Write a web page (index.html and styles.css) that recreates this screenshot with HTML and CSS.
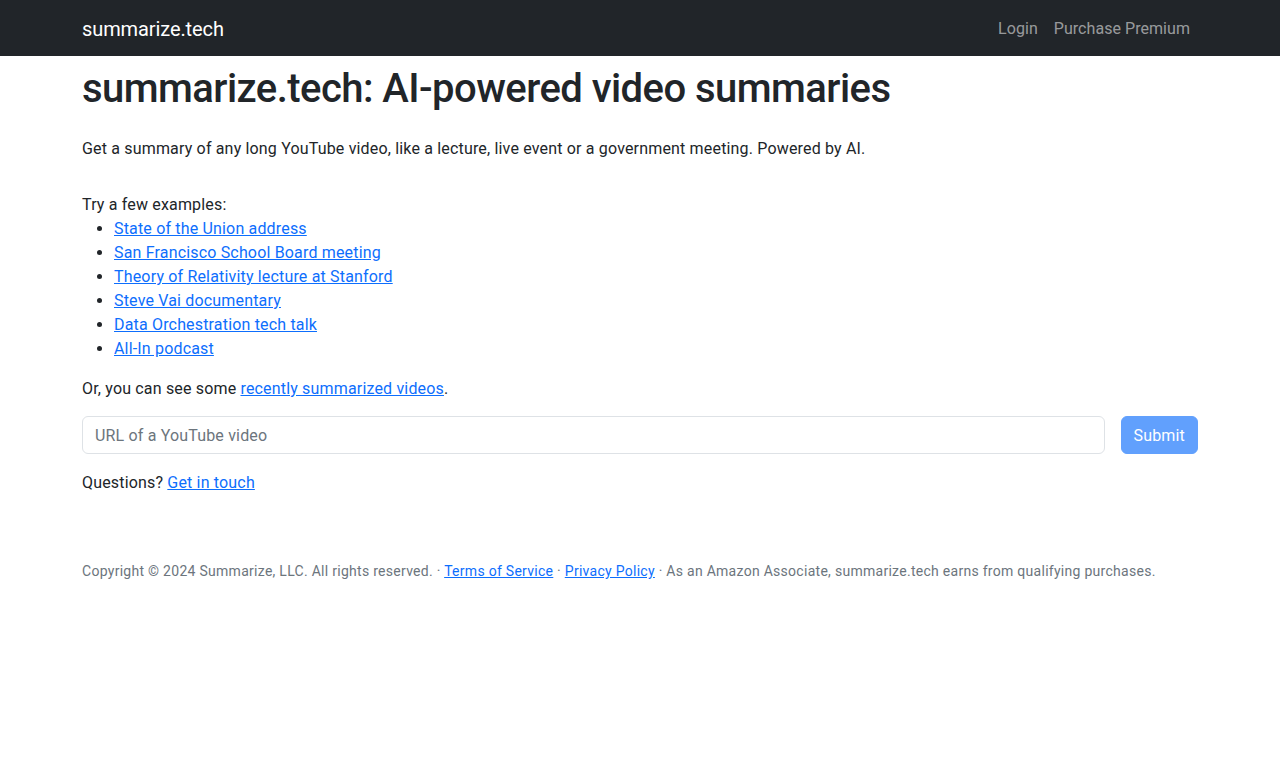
FILE: index.html
```html
<!DOCTYPE html>
<html lang="en">
<head>
<meta charset="utf-8">
<title>summarize.tech</title>
<link rel="stylesheet" href="styles.css">
</head>
<body>
<nav class="navbar">
  <div class="container nav-inner">
    <a class="brand" href="#">summarize.tech</a>
    <div class="nav-links">
      <a class="nav-link" href="#">Login</a>
      <a class="nav-link" href="#">Purchase Premium</a>
    </div>
  </div>
</nav>
<main class="container main">
  <h1 class="title">summarize.tech: AI-powered video summaries</h1>
  <p class="lead-text">Get a summary of any long YouTube video, like a lecture, live event or a government meeting. Powered by AI.</p>
  <div class="examples">
    <div>Try a few examples:</div>
    <ul class="example-list">
      <li><a href="#">State of the Union address</a></li>
      <li><a href="#">San Francisco School Board meeting</a></li>
      <li><a href="#">Theory of Relativity lecture at Stanford</a></li>
      <li><a href="#">Steve Vai documentary</a></li>
      <li><a href="#">Data Orchestration tech talk</a></li>
      <li><a href="#">All-In podcast</a></li>
    </ul>
  </div>
  <p>Or, you can see some <a href="#">recently summarized videos</a>.</p>
  <form class="url-form">
    <input class="url-input" type="text" placeholder="URL of a YouTube video">
    <button class="submit-btn" type="button" disabled>Submit</button>
  </form>
  <p>Questions? <a href="#">Get in touch</a></p>
  <footer class="footer">
    Copyright © 2024 Summarize, LLC. All rights reserved. · <a href="#">Terms of Service</a> · <a href="#">Privacy Policy</a> · As an Amazon Associate, summarize.tech earns from qualifying purchases.
  </footer>
</main>
</body>
</html>
```
FILE: styles.css
```css
* { box-sizing: border-box; }
html, body { margin: 0; padding: 0; }
body {
  font-family: Roboto, Inter, "Liberation Sans", sans-serif;
  font-size: 16px;
  line-height: 1.5;
  letter-spacing: 0.17px;
  color: #212529;
  background: #fff;
}
a { color: #0d6efd; text-decoration: underline; }
.container {
  width: 1140px;
  margin: 0 auto;
  padding: 0 12px;
}
.navbar {
  background: #212529;
  padding: 8px 0;
}
.nav-inner {
  display: flex;
  align-items: center;
  justify-content: space-between;
}
.brand {
  color: #fff;
  text-decoration: none;
  font-size: 20px;
  line-height: 30px;
  padding: 6px 0 4px;
  letter-spacing: -0.1px;
}
.nav-links {
  display: flex;
}
.nav-link {
  color: rgba(255,255,255,0.55);
  text-decoration: none;
  padding: 9px 8px 7px;
  line-height: 24px;
  letter-spacing: 0.05px;
}
.main { padding-top: 8px; }
.title {
  font-size: 40px;
  font-weight: 500;
  line-height: 48px;
  letter-spacing: -0.55px;
  margin: 0 0 23px;
  padding-top: 1px;
}
p { margin: 0 0 15px; padding-top: 1px; }
.lead-text { margin-bottom: 31px; }
.examples { padding-top: 1px; }
.example-list {
  margin: 0 0 15px;
  padding-left: 32px;
}
.url-form {
  display: flex;
  gap: 16px;
  margin-bottom: 16px;
}
.url-input {
  flex: 1;
  height: 38px;
  padding: 6px 12px;
  font: inherit;
  letter-spacing: 0.17px;
  color: #212529;
  border: 1px solid #dee2e6;
  border-radius: 6px;
  outline: none;
}
.url-input::placeholder { color: #6c757d; opacity: 1; }
.submit-btn {
  height: 38px;
  padding: 7px 12px 5px;
  font: inherit;
  letter-spacing: 0.17px;
  color: #fff;
  background: #0d6efd;
  border: 1px solid #0d6efd;
  border-radius: 6px;
  opacity: 0.65;
}
.footer {
  margin-top: 66px;
  font-size: 14px;
  line-height: 21px;
  letter-spacing: 0.28px;
  color: #6c757d;
}
```
